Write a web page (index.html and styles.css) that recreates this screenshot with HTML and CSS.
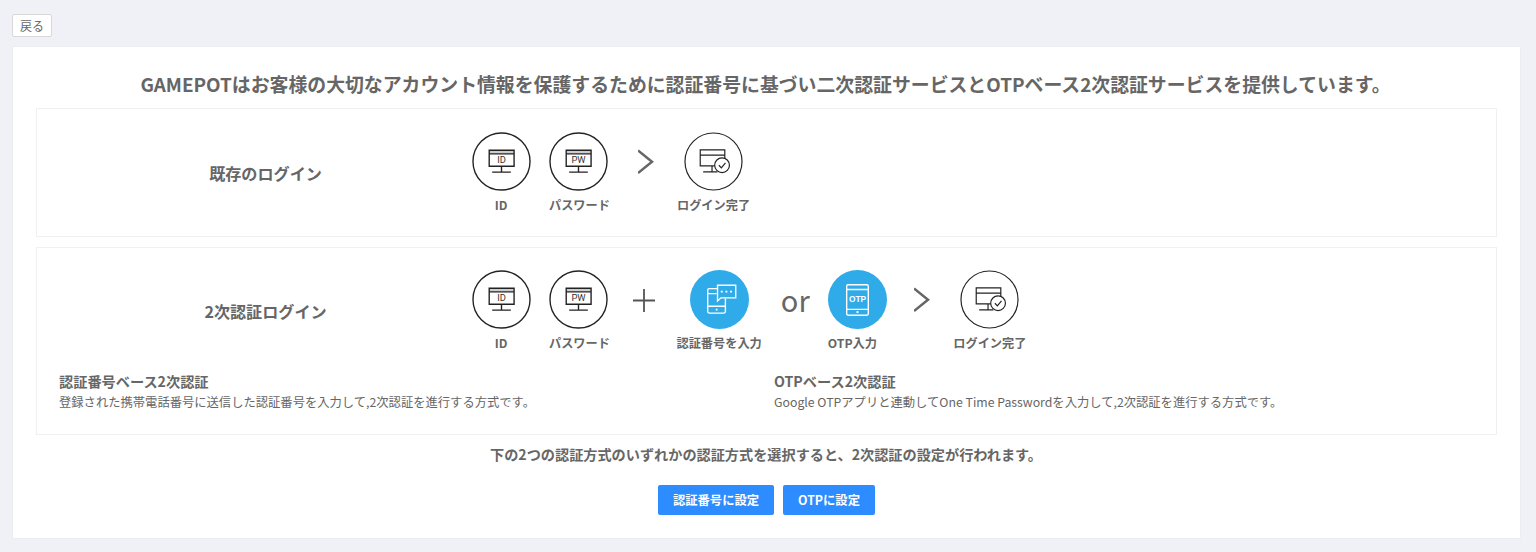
FILE: index.html
```html
<!DOCTYPE html>
<html lang="ja">
<head>
<meta charset="utf-8">
<title>2次認証</title>
<link rel="stylesheet" href="styles.css">
</head>
<body>
<svg class="defs" aria-hidden="true">
  <symbol id="monitor" viewBox="0 0 60 60">
    <path class="bar" d="M17.5 18.6H42.8V22H17.5z"/>
    <path d="M17.5 18.6H42.8V34.8H17.5zM17.5 22.3H42.8M30 34.8V40.4M20.5 40.8H39.5"/>
  </symbol>
  <symbol id="done" viewBox="0 0 60 60">
    <path d="M31 34.5H16.5V18.2H41.5V26.5M16.5 23.5H41.5M28.5 34.5V40.4M19.5 40.6H34"/>
    <circle cx="38.7" cy="33.8" r="7.5"/>
    <path d="M35.5 33.8L38 36.4L42.2 31.3"/>
  </symbol>
</svg>
<button class="back">戻る</button>
<main class="card">
  <h1 class="title">GAMEPOTはお客様の大切なアカウント情報を保護するために認証番号に基づい二次認証サービスとOTPベース2次認証サービスを提供しています。</h1>
  <section class="panel panel-basic">
    <div class="flow">
      <h2 class="flow-name">既存のログイン</h2>
      <div class="steps">
        <div class="step step-id"><svg class="icon" viewBox="0 0 60 60"><circle cx="30" cy="30" r="29"/><use href="#monitor"/><text x="30" y="32">ID</text></svg><span class="label">ID</span></div>
        <div class="step step-pw"><svg class="icon" viewBox="0 0 60 60"><circle cx="30" cy="30" r="29"/><use href="#monitor"/><text x="30" y="32">PW</text></svg><span class="label">パスワード</span></div>
        <svg class="arrow" viewBox="0 0 16 26"><path d="M0 1.5L14 12.8L0 24"/></svg>
        <div class="step"><svg class="icon thin" viewBox="0 0 60 60"><circle cx="30" cy="30" r="29"/><use href="#done"/></svg><span class="label">ログイン完了</span></div>
      </div>
    </div>
  </section>
  <section class="panel panel-second">
    <div class="flow">
      <h2 class="flow-name">2次認証ログイン</h2>
      <div class="steps">
        <div class="step step-id"><svg class="icon" viewBox="0 0 60 60"><circle cx="30" cy="30" r="29"/><use href="#monitor"/><text x="30" y="32">ID</text></svg><span class="label">ID</span></div>
        <div class="step step-pw"><svg class="icon" viewBox="0 0 60 60"><circle cx="30" cy="30" r="29"/><use href="#monitor"/><text x="30" y="32">PW</text></svg><span class="label">パスワード</span></div>
        <svg class="plus" viewBox="0 0 24 24"><path d="M1 12.5H23M12 1V24"/></svg>
        <div class="step step-sms"><svg class="icon filled" viewBox="0 0 60 60"><circle class="disc" cx="30" cy="30" r="30"/><path d="M27.5 19H19.5Q18 19 18 20.5V42.3Q18 43.8 19.5 43.8H34.5Q36 43.8 36 42.3V29M18 24H27M18 36.8H36"/><path d="M28 15.5H46.5V28.3H31.5L28 31.5z"/><path class="dots" d="M31.3 22h2M36 22h2M40.7 22h2M26.2 40.3h1.8"/></svg><span class="label">認証番号を入力</span></div>
        <span class="or">or</span>
        <div class="step step-otp"><svg class="icon filled" viewBox="0 0 60 60"><circle class="disc" cx="30" cy="30" r="30"/><rect x="19" y="15" width="22" height="31" rx="1.5"/><path d="M19 19.8H41M19 40H41"/><path class="dots" d="M29 42.8h2"/><text x="30" y="33">OTP</text></svg><span class="label">OTP入力</span></div>
        <svg class="arrow" viewBox="0 0 16 26"><path d="M0 1.5L14 12.8L0 24"/></svg>
        <div class="step"><svg class="icon thin" viewBox="0 0 60 60"><circle cx="30" cy="30" r="29"/><use href="#done"/></svg><span class="label">ログイン完了</span></div>
      </div>
    </div>
    <div class="methods">
      <div class="method"><h3 class="method-name">認証番号ベース2次認証</h3><p class="method-text">登録された携帯電話番号に送信した認証番号を入力して,2次認証を進行する方式です。</p></div>
      <div class="method"><h3 class="method-name">OTPベース2次認証</h3><p class="method-text">Google OTPアプリと連動してOne Time Passwordを入力して,2次認証を進行する方式です。</p></div>
    </div>
  </section>
  <p class="note">下の2つの認証方式のいずれかの認証方式を選択すると、2次認証の設定が行われます。</p>
  <div class="actions"><button class="primary primary-sms">認証番号に設定</button><button class="primary primary-otp">OTPに設定</button></div>
</main>
</body>
</html>
```
FILE: styles.css
```css
* { box-sizing: border-box; margin: 0; padding: 0; }
body {
  height: 552px;
  padding: 14px 16px 0 12px;
  overflow: hidden;
  background: #eff1f6;
  color: #666;
  font-family: "Noto Sans CJK JP", "Noto Sans", sans-serif;
}
button { font-family: inherit; }
.defs { display: none; }
.back {
  display: block;
  width: 40px;
  height: 23px;
  border: 1px solid #d8d8d8;
  border-radius: 2px;
  background: #fff;
  color: #666;
  font-size: 12px;
  line-height: 21px;
}
.card {
  height: 491px;
  margin: 10px 0 0 1px;
  padding: 23px 23px 0;
  background: #fff;
  box-shadow: 0 0 1px #ddd;
}
.title {
  height: 38px;
  padding-right: 2px;
  text-align: center;
  font-size: 18.86px;
  line-height: 28px;
  white-space: nowrap;
}
.panel { border: 1px solid #f0f0f0; padding: 23px 22px 0; }
.panel-basic { height: 129px; margin-bottom: 10px; }
.panel-second { height: 188px; padding-top: 22px; }
.flow { display: flex; height: 82px; align-items: center; }
.flow-name { width: 413px; text-align: center; font-size: 16.1px; line-height: 24px; }
.steps { display: flex; align-items: flex-start; }
.step { display: flex; flex-direction: column; align-items: center; gap: 4px; }
.step-id { width: 58px; margin-right: 19px; }
.step-pw, .step-otp { align-items: flex-start; }
.step-pw { width: 61.5px; }
.icon { width: 59px; height: 59px; fill: none; stroke: #222; stroke-width: 1.4; }
.icon.thin { stroke-width: 1.2; }
.icon text { fill: #333; stroke: none; font: 9.5px Roboto, sans-serif; text-anchor: middle; }
.bar { fill: #ccc; stroke: none; }
.icon.filled { stroke: #fff; stroke-width: 1.4; }
.icon .disc { fill: #30abe9; stroke: none; }
.icon.filled text { fill: #fff; font: 700 8.5px "Liberation Sans", sans-serif; }
.icon .dots { stroke-width: 2; }
.label { font-size: 12.2px; line-height: 20px; font-weight: 700; white-space: nowrap; }
.arrow { width: 16px; height: 26px; margin: 17px 23.5px 0 27px; fill: none; stroke: #666; stroke-width: 2.5; }
.plus { width: 24px; height: 24px; margin: 18px 21px 0 21px; fill: none; stroke: #555; stroke-width: 1.8; }
.or { width: 66px; padding-left: 19px; font-size: 29px; line-height: 59px; }
.methods { display: flex; margin-top: 19px; }
.method { flex: 0 0 715px; }
.method-name { font-size: 14.2px; line-height: 20px; }
.method-text { font-size: 12.3px; line-height: 23px; white-space: nowrap; }
.note { margin-top: 9px; padding-right: 1px; text-align: center; font-size: 14.17px; line-height: 21px; font-weight: 700; }
.actions { display: flex; justify-content: center; gap: 9px; margin-top: 20px; }
.primary {
  height: 30px;
  border: 0;
  border-radius: 2px;
  background: #2d8cff;
  color: #fff;
  font-size: 12.3px;
  font-weight: 700;
  line-height: 30px;
}
.primary-sms { width: 116px; }
.primary-otp { width: 92px; }
```
